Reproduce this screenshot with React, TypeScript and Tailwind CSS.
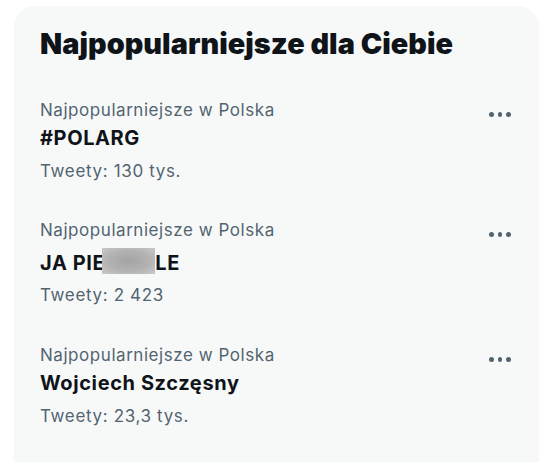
import React from "react";

type Trend = {
  context: string;
  name: React.ReactNode;
  count: string;
  titleGap: string;
  countGap: string;
  bottom: string;
};

function MoreDots() {
  return (
    <div className="flex items-center gap-[3.8px] pt-[14px] pr-[2.5px]">
      <span className="w-[4.5px] h-[4.5px] rounded-full bg-[#536471]" />
      <span className="w-[4.5px] h-[4.5px] rounded-full bg-[#536471]" />
      <span className="w-[4.5px] h-[4.5px] rounded-full bg-[#536471]" />
    </div>
  );
}

const trends: Trend[] = [
  {
    context: "Najpopularniejsze w Polska",
    name: "#POLARG",
    count: "Tweety: 130 tys.",
    titleGap: "mt-0",
    countGap: "mt-[3px]",
    bottom: "pb-[33px]",
  },
  {
    context: "Najpopularniejsze w Polska",
    name: (
      <span className="inline-flex items-start">
        JA PIE
        <span className="inline-block w-[53px] h-[26px] mt-[1px] -ml-[3px] bg-[radial-gradient(ellipse_at_center,#a4a4a4_0%,#b2b2b2_55%,#c9c9c9_100%)] blur-[0.4px]" />
        LE
      </span>
    ),
    count: "Tweety: 2 423",
    titleGap: "mt-[5px]",
    countGap: "mt-[2px]",
    bottom: "pb-[34px]",
  },
  {
    context: "Najpopularniejsze w Polska",
    name: "Wojciech Szczęsny",
    count: "Tweety: 23,3 tys.",
    titleGap: "mt-0",
    countGap: "mt-[3px]",
    bottom: "pb-[33px]",
  },
];

export default function App() {
  return (
    <div className="w-[556px] h-[462px] bg-white overflow-hidden pt-[6px] pl-[14px] font-['Inter',sans-serif]">
      <div className="w-[525px] h-[480px] rounded-[21px] bg-[#f7f9f9]">
        <div className="px-[26px] pt-[20px] pb-[36px]">
          <h2 className="text-[28.8px] leading-[36px] font-black tracking-[0.05px] text-[#0f1419]">
            Najpopularniejsze dla Ciebie
          </h2>
        </div>
        {trends.map((t, i) => (
          <div key={i} className={`flex items-start justify-between px-[26px] ${t.bottom}`}>
            <div className="flex flex-col">
              <span className="text-[17px] leading-[24px] tracking-[0.55px] text-[#536471]">{t.context}</span>
              <span className={`text-[20px] leading-[32px] tracking-[0.6px] font-bold text-[#0f1419] ${t.titleGap}`}>
                {t.name}
              </span>
              <span className={`text-[17px] leading-[28px] tracking-[0.65px] text-[#536471] ${t.countGap}`}>
                {t.count}
              </span>
            </div>
            <MoreDots />
          </div>
        ))}
      </div>
    </div>
  );
}
